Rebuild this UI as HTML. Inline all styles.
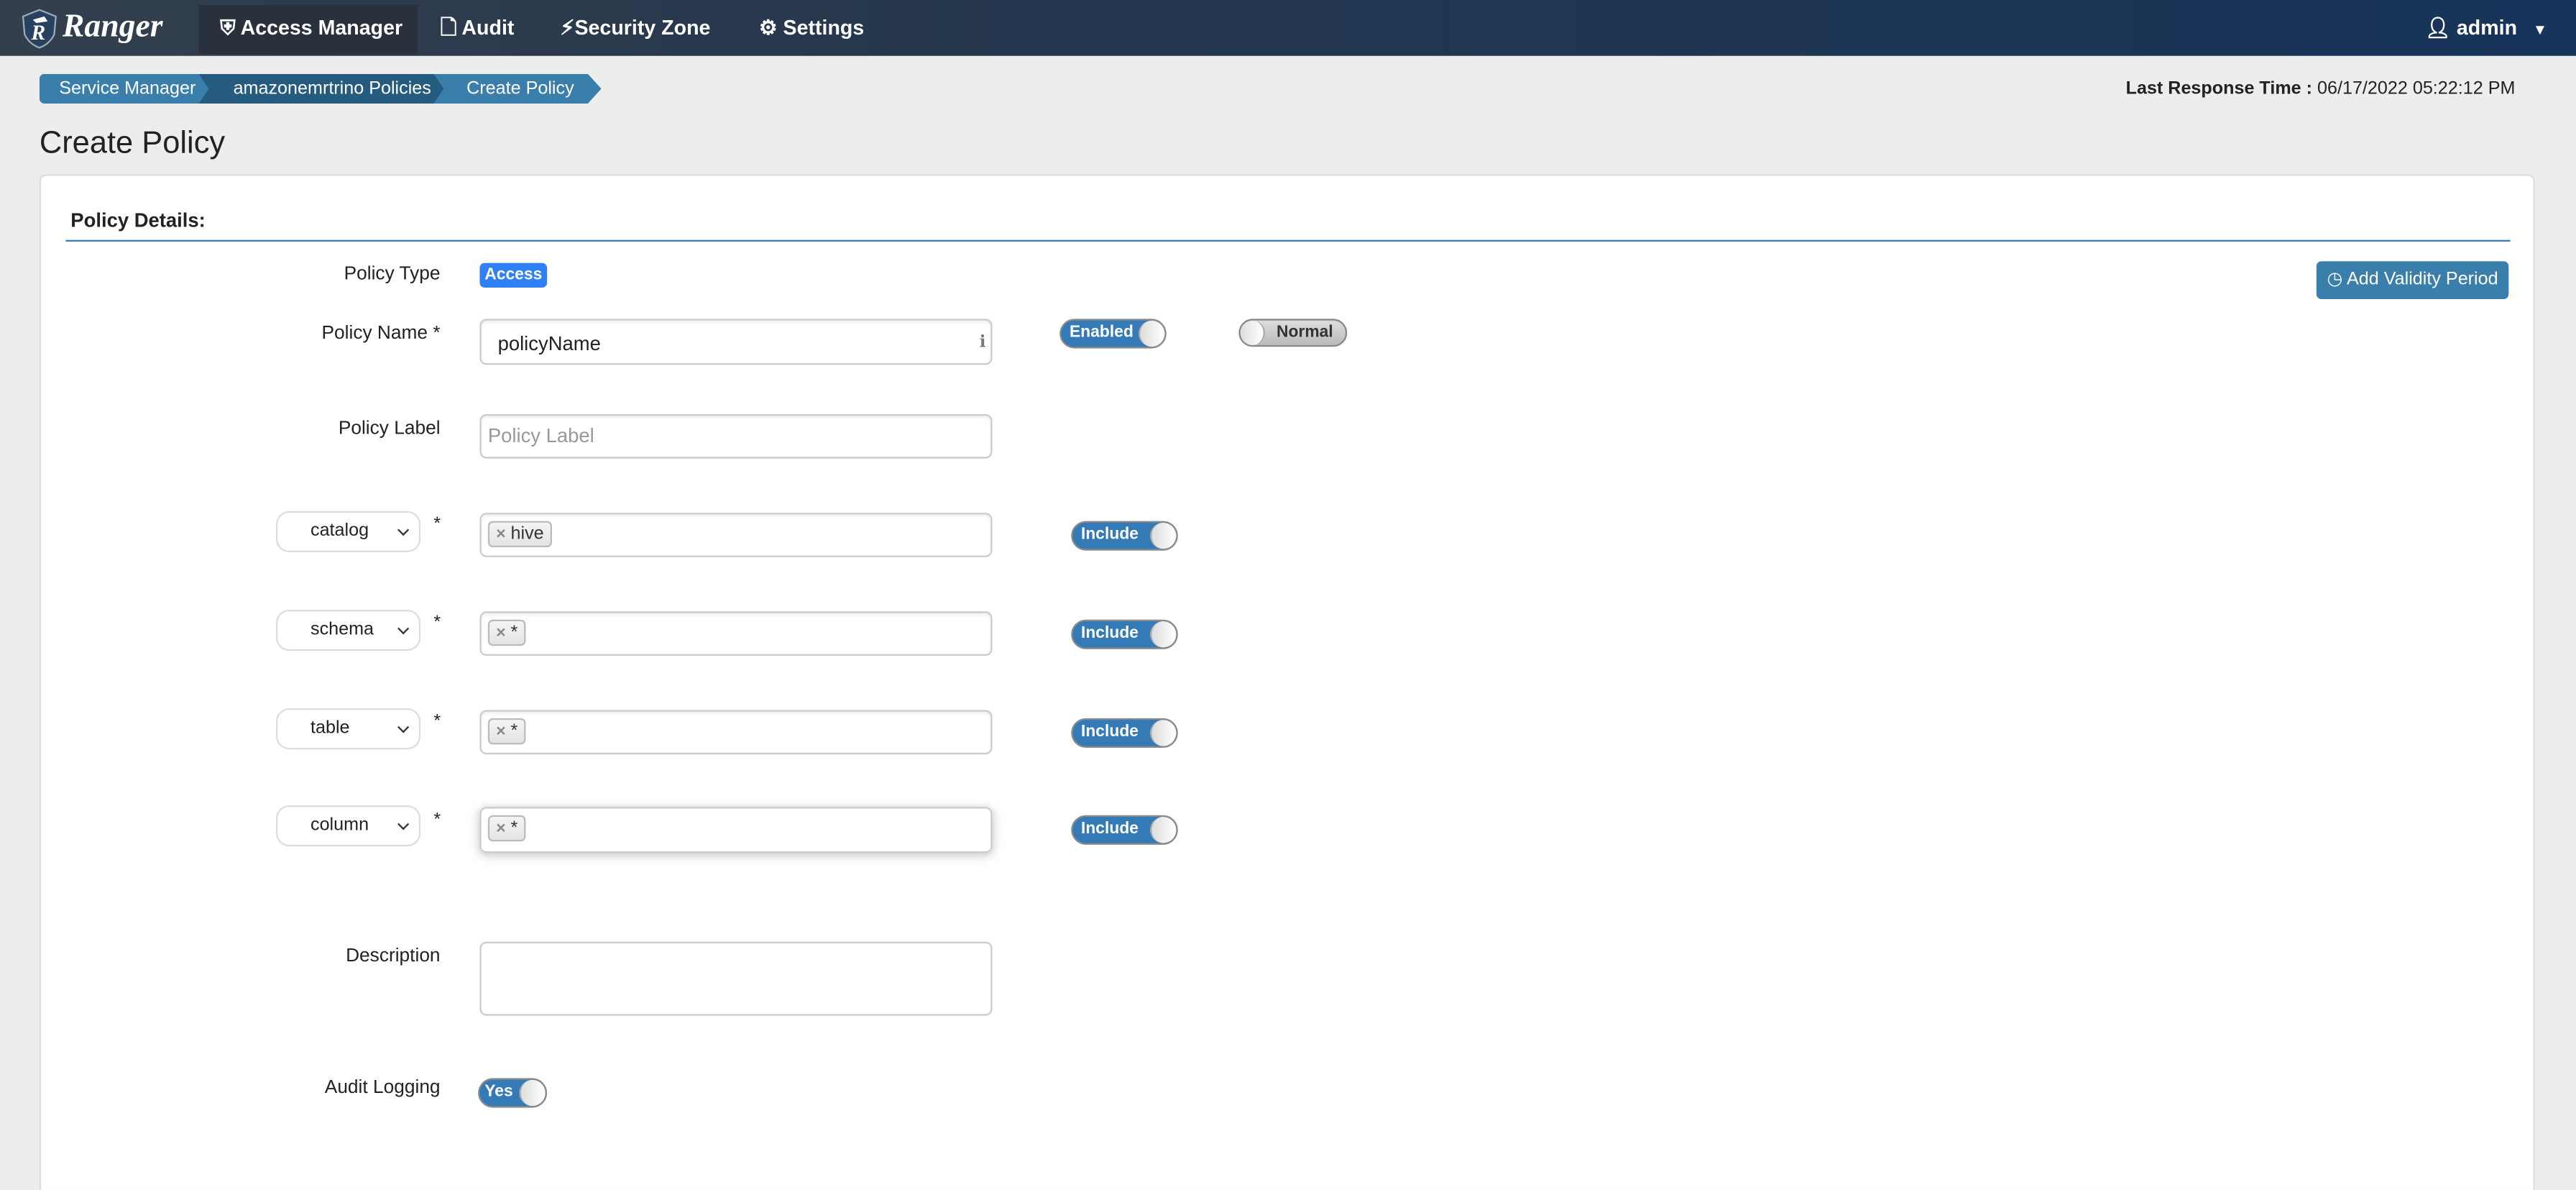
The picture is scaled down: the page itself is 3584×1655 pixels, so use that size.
<!DOCTYPE html>
<html><head><meta charset="utf-8"><style>
*{box-sizing:border-box;margin:0;padding:0}
html,body{width:3584px;height:1654px;overflow:hidden;background:#ededed}
#w{position:absolute;left:0;top:0;width:1568px;height:724px;transform:scale(2.28571);transform-origin:0 0;font-family:"Liberation Sans",sans-serif;color:#333;background:#ededed;overflow:hidden}
.a{position:absolute}
.nav{left:0;top:0;width:1568px;height:34px;background:linear-gradient(90deg,#333f4d,#24364d 40%,#17345a)}
.ni{top:0;height:34px;line-height:34px;color:#fff;font-weight:bold;font-size:12.5px}
.bc{top:45px;height:18px;line-height:18px;color:#fff;font-size:11px;padding-left:12px}
.lbl{font-size:11.5px;color:#222;text-align:right;width:268px;left:0}
.inp{left:292px;width:312px;background:#fff;border:1px solid #ccc;border-radius:4px;box-shadow:inset 0 1px 2px rgba(0,0,0,.08)}
.sel{left:168px;width:88px;height:25px;border:1px solid #ddd;border-radius:8px;background:#fff;font-size:11px;line-height:23px;padding-left:20px;color:#222}
.sel:after{content:"";position:absolute;right:7px;top:8px;width:4px;height:4px;border-right:1px solid #333;border-bottom:1px solid #333;transform:rotate(45deg)}
.tag{position:absolute;left:4px;top:4px;height:16px;border:1px solid #bbb;border-radius:3px;background:linear-gradient(#f4f4f4,#e4e4e4);font-size:11px;line-height:14px;padding:0 4px;color:#333}
.tag b{color:#888;font-size:10px;margin-right:3px}
.tg{height:18px;border-radius:9px;background:#337ab7;border:1px solid #8a8a8a;color:#fff;font-weight:bold;font-size:10px;line-height:16px;padding-left:5px;overflow:hidden}
.tg:after{content:"";position:absolute;right:0;top:0;width:15px;height:16px;border-radius:8px;background:linear-gradient(90deg,#ddd,#fff);border-left:1px solid #aaa}
.ast{font-size:11px;color:#222}
</style></head><body><div id="w">
<div class="a nav"></div>
<svg class="a" style="left:12px;top:5px" width="24" height="25" viewBox="0 0 24 25"><path d="M12 1 L22 5 L21 16 Q18 22 12 24 Q6 22 3 16 L2 5 Z" fill="#27415e" stroke="#9ab" stroke-width="1"/><text x="7" y="19" font-family="Liberation Serif" font-style="italic" font-weight="bold" font-size="13" fill="#fff">R</text><path d="M8 7 L15 5 L17 8 L10 9Z" fill="#fff"/></svg>
<div class="a" style="left:38px;top:5px;font-family:'Liberation Serif',serif;font-style:italic;font-weight:bold;font-size:20px;color:#fff">Ranger</div>
<div class="a" style="left:121px;top:3px;width:133px;height:30px;background:#28313c"></div>
<div class="a ni" style="left:134px">&#x26E8; Access Manager</div>
<div class="a ni" style="left:268px">&#x1F5CB; Audit</div>
<div class="a ni" style="left:341px">&#x26A1;&#xFE0E;Security Zone</div>
<div class="a ni" style="left:462px">&#x2699; Settings</div>
<div class="a ni" style="left:1476px">&#x1F464;&#xFE0E; admin <span style="font-size:9px;margin-left:6px">&#x25BC;</span></div>
<div class="a bc" style="left:24px;width:108px;background:#3a7fab;border-radius:3px 0 0 3px;clip-path:polygon(0 0,92% 0,100% 50%,92% 100%,0 100%)">Service Manager</div>
<div class="a bc" style="left:121px;width:152px;background:#255b7e;clip-path:polygon(0 0,95% 0,100% 50%,95% 100%,0 100%,4% 50%);padding-left:21px">amazonemrtrino Policies</div>
<div class="a bc" style="left:264px;width:102px;background:#3a7fab;clip-path:polygon(0 0,92% 0,100% 50%,92% 100%,0 100%,6% 50%);padding-left:20px">Create Policy</div>
<div class="a" style="right:37px;top:48px;font-size:11px;color:#222"><b>Last Response Time :</b> 06/17/2022 05:22:12 PM</div>
<div class="a" style="left:24px;top:77px;font-size:19px;color:#222">Create Policy</div>
<div class="a" style="left:24px;top:106px;width:1519px;height:700px;background:#fff;border:1px solid #ddd;border-radius:4px"></div>
<div class="a" style="left:43px;top:127px;font-size:12px;font-weight:bold;color:#222">Policy Details:</div>
<div class="a" style="left:40px;top:146px;width:1488px;height:1px;background:#3a7fab"></div>
<div class="a" style="left:1410px;top:159px;width:117px;height:23px;background:#3a7fab;border-radius:3px;color:#fff;font-size:11px;line-height:23px;text-align:center">&#x25F7; Add Validity Period</div>
<div class="a lbl" style="top:161px">Policy Type</div>
<div class="a" style="left:292px;top:160px;width:41px;height:15px;background:#2f80f5;border-radius:3px;color:#fff;font-weight:bold;font-size:10px;line-height:15px;text-align:center">Access</div>
<div class="a lbl" style="top:197px">Policy Name *</div>
<div class="a inp" style="top:194px;height:28px;font-size:12px;line-height:28px;padding-left:10px;color:#222">policyName<span style="position:absolute;right:3px;top:0;color:#777;font-size:10px">&#x2139;</span></div>
<div class="a tg" style="left:645px;top:194px;width:65px">Enabled</div>
<div class="a" style="left:754px;top:194px;width:66px;height:17px;border-radius:9px;background:linear-gradient(#ddd,#bbb);border:1px solid #888;font-size:10px;font-weight:bold;line-height:15px;color:#333;padding-left:22px">Normal<span style="position:absolute;left:0;top:0;width:15px;height:15px;border-radius:8px;background:linear-gradient(90deg,#ddd,#fff);border-right:1px solid #aaa"></span></div>
<div class="a lbl" style="top:255px">Policy Label</div>
<div class="a inp" style="top:252px;height:27px;font-size:12px;line-height:25px;padding-left:4px;color:#999">Policy Label</div>

<div class="a sel" style="top:311px">catalog</div><div class="a ast" style="left:264px;top:313px">*</div>
<div class="a inp" style="top:312px;height:27px"><div class="tag"><b>×</b>hive</div></div>
<div class="a tg" style="left:652px;top:317px;width:65px">Include</div>

<div class="a sel" style="top:371px">schema</div><div class="a ast" style="left:264px;top:373px">*</div>
<div class="a inp" style="top:372px;height:27px"><div class="tag"><b>×</b>*</div></div>
<div class="a tg" style="left:652px;top:377px;width:65px">Include</div>

<div class="a sel" style="top:431px">table</div><div class="a ast" style="left:264px;top:433px">*</div>
<div class="a inp" style="top:432px;height:27px"><div class="tag"><b>×</b>*</div></div>
<div class="a tg" style="left:652px;top:437px;width:65px">Include</div>

<div class="a sel" style="top:490px">column</div><div class="a ast" style="left:264px;top:493px">*</div>
<div class="a inp" style="top:491px;height:28px;box-shadow:0 1px 6px rgba(0,0,0,.25)"><div class="tag"><b>×</b>*</div></div>
<div class="a tg" style="left:652px;top:496px;width:65px">Include</div>

<div class="a lbl" style="top:576px">Description</div>
<div class="a inp" style="top:573px;height:45px;box-shadow:none"></div>
<div class="a lbl" style="top:656px">Audit Logging</div>
<div class="a tg" style="left:291px;top:656px;width:42px;padding-left:3px">Yes</div>
</div></body></html>
